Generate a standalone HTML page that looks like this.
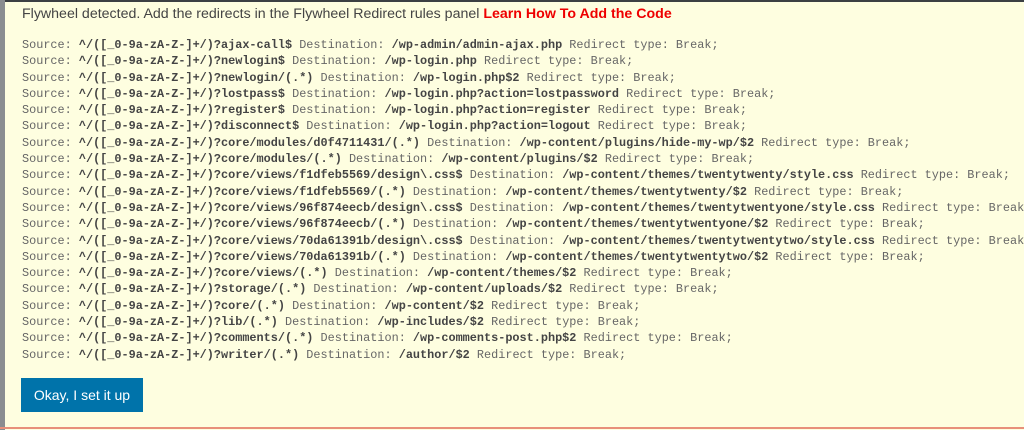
<!DOCTYPE html><html><head><style>
body{margin:0;width:1024px;height:430px;overflow:hidden;background:#fefee0;font-family:"Liberation Sans",sans-serif;position:relative}
.top{position:absolute;left:0;top:0;width:1024px;height:2px;background:#3c4043}
.left{position:absolute;left:0;top:0;width:5px;height:430px;background:#8a8d90}
.bot{position:absolute;left:0;top:427px;width:1024px;height:2px;background:#e8907a}
.h{position:absolute;left:22px;top:6px;font-size:14.2px;color:#444;white-space:nowrap}
.h b{color:#e00;font-weight:bold}
.code{position:absolute;left:22px;top:37px;font-family:"Liberation Mono",monospace;font-size:11.85px;line-height:16.3px;color:#666;white-space:pre}
.code b{color:#444}
.btn{position:absolute;left:21px;top:378px;width:122px;height:34px;background:#0073aa;color:#fff;font-size:14px;line-height:34px;text-align:center}
</style></head><body>
<div class="top"></div><div class="left"></div><div class="bot"></div>
<div class="h">Flywheel detected. Add the redirects in the Flywheel Redirect rules panel <b>Learn How To Add the Code</b></div>
<div class="code">Source: <b>^/([_0-9a-zA-Z-]+/)?ajax-call$</b> Destination: <b>/wp-admin/admin-ajax.php</b> Redirect type: Break;
Source: <b>^/([_0-9a-zA-Z-]+/)?newlogin$</b> Destination: <b>/wp-login.php</b> Redirect type: Break;
Source: <b>^/([_0-9a-zA-Z-]+/)?newlogin/(.*)</b> Destination: <b>/wp-login.php$2</b> Redirect type: Break;
Source: <b>^/([_0-9a-zA-Z-]+/)?lostpass$</b> Destination: <b>/wp-login.php?action=lostpassword</b> Redirect type: Break;
Source: <b>^/([_0-9a-zA-Z-]+/)?register$</b> Destination: <b>/wp-login.php?action=register</b> Redirect type: Break;
Source: <b>^/([_0-9a-zA-Z-]+/)?disconnect$</b> Destination: <b>/wp-login.php?action=logout</b> Redirect type: Break;
Source: <b>^/([_0-9a-zA-Z-]+/)?core/modules/d0f4711431/(.*)</b> Destination: <b>/wp-content/plugins/hide-my-wp/$2</b> Redirect type: Break;
Source: <b>^/([_0-9a-zA-Z-]+/)?core/modules/(.*)</b> Destination: <b>/wp-content/plugins/$2</b> Redirect type: Break;
Source: <b>^/([_0-9a-zA-Z-]+/)?core/views/f1dfeb5569/design\.css$</b> Destination: <b>/wp-content/themes/twentytwenty/style.css</b> Redirect type: Break;
Source: <b>^/([_0-9a-zA-Z-]+/)?core/views/f1dfeb5569/(.*)</b> Destination: <b>/wp-content/themes/twentytwenty/$2</b> Redirect type: Break;
Source: <b>^/([_0-9a-zA-Z-]+/)?core/views/96f874eecb/design\.css$</b> Destination: <b>/wp-content/themes/twentytwentyone/style.css</b> Redirect type: Break;
Source: <b>^/([_0-9a-zA-Z-]+/)?core/views/96f874eecb/(.*)</b> Destination: <b>/wp-content/themes/twentytwentyone/$2</b> Redirect type: Break;
Source: <b>^/([_0-9a-zA-Z-]+/)?core/views/70da61391b/design\.css$</b> Destination: <b>/wp-content/themes/twentytwentytwo/style.css</b> Redirect type: Break;
Source: <b>^/([_0-9a-zA-Z-]+/)?core/views/70da61391b/(.*)</b> Destination: <b>/wp-content/themes/twentytwentytwo/$2</b> Redirect type: Break;
Source: <b>^/([_0-9a-zA-Z-]+/)?core/views/(.*)</b> Destination: <b>/wp-content/themes/$2</b> Redirect type: Break;
Source: <b>^/([_0-9a-zA-Z-]+/)?storage/(.*)</b> Destination: <b>/wp-content/uploads/$2</b> Redirect type: Break;
Source: <b>^/([_0-9a-zA-Z-]+/)?core/(.*)</b> Destination: <b>/wp-content/$2</b> Redirect type: Break;
Source: <b>^/([_0-9a-zA-Z-]+/)?lib/(.*)</b> Destination: <b>/wp-includes/$2</b> Redirect type: Break;
Source: <b>^/([_0-9a-zA-Z-]+/)?comments/(.*)</b> Destination: <b>/wp-comments-post.php$2</b> Redirect type: Break;
Source: <b>^/([_0-9a-zA-Z-]+/)?writer/(.*)</b> Destination: <b>/author/$2</b> Redirect type: Break;</div>
<div class="btn">Okay, I set it up</div>
</body></html>
